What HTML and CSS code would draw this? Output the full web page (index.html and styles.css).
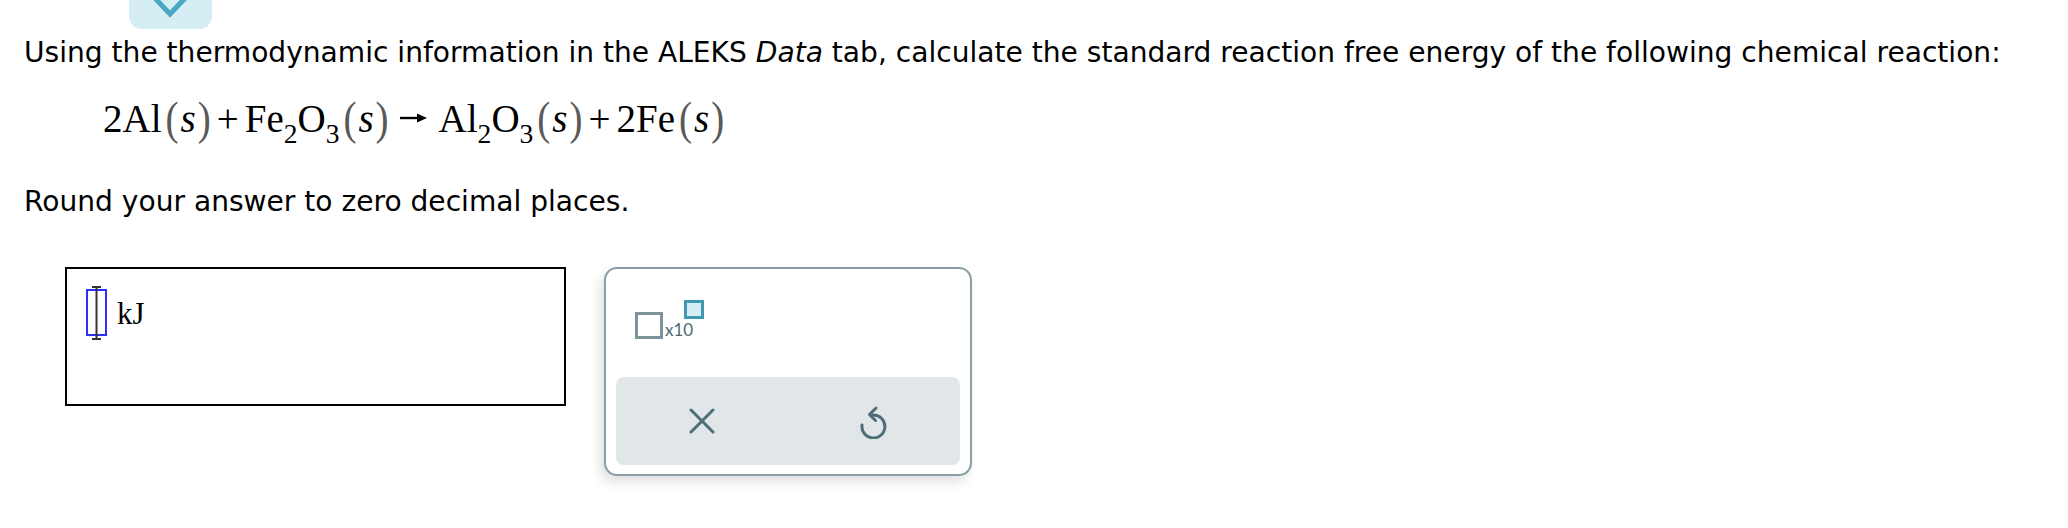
FILE: index.html
```html
<!DOCTYPE html>
<html>
<head>
<meta charset="utf-8">
<link rel="stylesheet" href="styles.css">
</head>
<body>
<div class="tab"><svg class="chev" width="83" height="29" viewBox="0 0 83 29"><polyline points="23,-5 41,14 59,-5" fill="none" stroke="#4aa7c4" stroke-width="5"/></svg></div>
<p class="q">Using the thermodynamic information in the ALEKS <i>Data</i> tab, calculate the standard reaction free energy of the following chemical reaction:</p>
<div class="eq"><span>2Al</span><span class="p pl">(</span><i>s</i><span class="p">)</span><span class="op">+</span><span>Fe</span><sub>2</sub><span>O</span><sub>3</sub><span class="p pl">(</span><i>s</i><span class="p">)</span><span class="arr"><svg width="27" height="12" viewBox="0 0 27 12"><line x1="0" y1="6" x2="19" y2="6" stroke="#000" stroke-width="2.4"/><polygon points="17,1.5 27,6 17,10.5" fill="#000"/></svg></span><span>Al</span><sub>2</sub><span>O</span><sub>3</sub><span class="p pl">(</span><i>s</i><span class="p">)</span><span class="op">+</span><span>2Fe</span><span class="p pl">(</span><i>s</i><span class="p">)</span></div>
<p class="round">Round your answer to zero decimal places.</p>
<div class="answer-row">
  <div class="input-box">
    <svg class="cursor" width="24" height="54" viewBox="0 0 24 54">
      <rect x="2" y="4" width="19" height="45" fill="none" stroke="#2f2ff5" stroke-width="2"/>
      <line x1="11.5" y1="1" x2="11.5" y2="53" stroke="#333" stroke-width="2"/>
      <line x1="7" y1="1" x2="16" y2="1" stroke="#333" stroke-width="2"/>
      <line x1="7" y1="53" x2="16" y2="53" stroke="#333" stroke-width="2"/>
    </svg>
    <span class="unit">kJ</span>
  </div>
  <div class="panel">
    <div class="sci">
      <span class="base-box"></span>
      <span class="x10">x10</span>
      <span class="exp-box"></span>
    </div>
    <div class="bar">
      <div class="btn">
        <svg width="26" height="26" viewBox="0 0 26 26"><line x1="2" y1="2" x2="24" y2="24" stroke="#4f6d77" stroke-width="3" stroke-linecap="round"/><line x1="24" y1="2" x2="2" y2="24" stroke="#4f6d77" stroke-width="3" stroke-linecap="round"/></svg>
      </div>
      <div class="btn">
        <svg width="30" height="36" viewBox="0 0 30 36"><path d="M14 12 A11.5 11.5 0 1 1 3 22" fill="none" stroke="#4f6d77" stroke-width="3" stroke-linecap="round"/><polyline points="17,5 10.5,11.5 16.5,17.5" fill="none" stroke="#4f6d77" stroke-width="3" stroke-linecap="round" stroke-linejoin="round"/></svg>
      </div>
    </div>
  </div>
</div>
</body>
</html>
```
FILE: styles.css
```css
html, body {
  margin: 0;
  padding: 0;
  background: #fff;
}
body {
  font-family: "DejaVu Sans", Verdana, sans-serif;
  font-size: 28.1px;
  color: #000;
  width: 2068px;
  height: 528px;
  overflow: hidden;
}
.tab {
  margin-left: 129px;
  width: 83px;
  height: 29px;
  background: #d5eef4;
  border-radius: 0 0 13px 13px;
  overflow: hidden;
}
.chev { display: block; }
.q {
  margin: 7px 0 0 24px;
  line-height: 33px;
  white-space: nowrap;
}
.eq {
  margin: 27px 0 0 103px;
  height: 46px;
  line-height: 46px;
  font-family: "Liberation Serif", "Times New Roman", serif;
  font-size: 39px;
  white-space: nowrap;
}
.eq i { font-style: italic; margin: 0 2px; }
.eq sub {
  font-size: 0.707em;
  vertical-align: -11px;
  line-height: 0;
}
.eq .p {
  display: inline-block;
  transform: scaleY(1.18);
  color: #595959;
}
.eq .pl { margin-left: 4px; }
.eq .op { margin: 0 6px; }
.eq .arr {
  display: inline-block;
  margin: 0 12px 0 11px;
  vertical-align: 8px;
  line-height: 0;
}
.eq .arr svg { display: block; }
.round {
  margin: 43px 0 0 24px;
  line-height: 33px;
}
.answer-row {
  display: flex;
  align-items: flex-start;
  margin: 49px 0 0 65px;
}
.input-box {
  box-sizing: border-box;
  width: 501px;
  height: 139px;
  border: 2px solid #000;
  display: flex;
  align-items: flex-start;
  padding: 17px 0 0 18px;
}
.cursor { display: block; }
.unit {
  font-family: "Liberation Serif", "Times New Roman", serif;
  font-size: 31px;
  line-height: 31px;
  margin: 12px 0 0 8px;
}
.panel {
  box-sizing: border-box;
  margin-left: 38px;
  width: 368px;
  height: 209px;
  border: 2px solid #8a9ea7;
  border-radius: 13px;
  background: #fff;
  box-shadow: -4px 6px 12px rgba(0, 0, 0, 0.12);
  padding: 31px 10px 9px 10px;
  display: flex;
  flex-direction: column;
}
.sci {
  display: flex;
  align-items: flex-end;
  height: 39px;
  margin-left: 19px;
}
.base-box {
  box-sizing: border-box;
  width: 28px;
  height: 27px;
  border: 3px solid #7d929b;
}
.x10 {
  font-family: Lato, "Open Sans", sans-serif;
  font-size: 17px;
  line-height: 17px;
  color: #4f6873;
  margin: 0 0 1px 2px;
}
.exp-box {
  box-sizing: border-box;
  align-self: flex-start;
  width: 20px;
  height: 19px;
  border: 3px solid #4297b3;
  background: #d4eef4;
  margin-left: -9px;
}
.bar {
  margin-top: auto;
  height: 88px;
  background: #e1e6e8;
  border-radius: 8px;
  display: flex;
}
.btn {
  flex: 1;
  display: flex;
  align-items: center;
  justify-content: center;
}
.btn svg { display: block; }
```
